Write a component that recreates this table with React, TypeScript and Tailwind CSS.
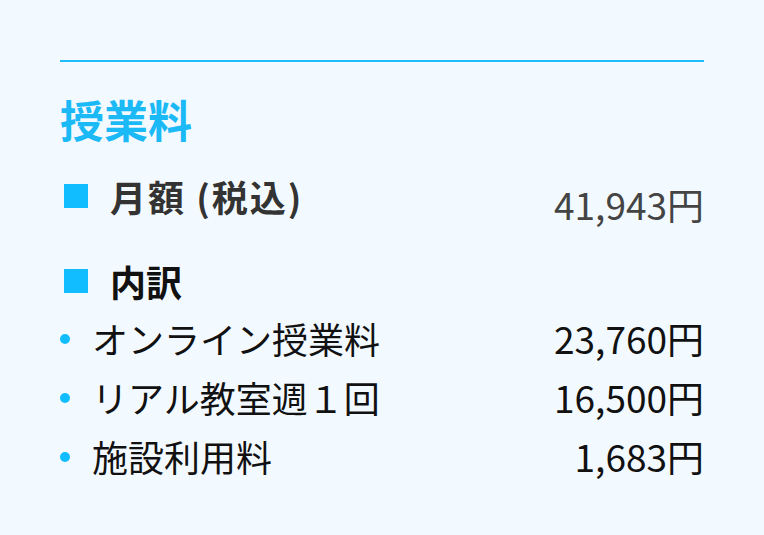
import React from "react";

const items = [
  { label: "オンライン授業料", price: "23,760円" },
  { label: "リアル教室週１回", price: "16,500円" },
  { label: "施設利用料", price: "1,683円" },
];

export default function App() {
  return (
    <div
      className="w-[764px] h-[535px] bg-[#f3faff] px-[60px] pt-[60px]"
      style={{ fontFamily: '"Noto Sans CJK JP", "Noto Sans", sans-serif' }}
    >
      <div className="h-[2px] bg-[#1ebcf9]" />
      <h2 className="mt-[35px] text-[44px] leading-[44px] font-bold text-[#1cb9f7]">授業料</h2>

      <div className="mt-[36px] flex justify-between items-start">
        <div className="flex items-center h-[38px]">
          <div className="ml-[4px] w-[24px] h-[24px] bg-[#12bdff]" />
          <span className="ml-[22px] text-[36px] leading-[38px] font-bold tracking-[2px] text-[#333333]">
            月額 (税込)
          </span>
        </div>
        <span className="pt-[8px] text-[37px] leading-[38px] text-[#444444]">41,943円</span>
      </div>

      <div className="mt-[39px] flex items-center h-[38px]">
        <div className="ml-[4px] w-[24px] h-[24px] bg-[#12bdff]" />
        <span className="ml-[22px] text-[36px] leading-[38px] font-bold text-[#111111]">内訳</span>
      </div>

      <div className="mt-[9px] flex flex-col">
        {items.map((it) => (
          <div key={it.label} className="flex justify-between items-center h-[59px]">
            <div className="flex items-center">
              <div className="w-[10px] h-[10px] rounded-full bg-[#12bdff]" />
              <span className="ml-[22px] text-[36px] leading-[59px] text-[#111111]">{it.label}</span>
            </div>
            <span className="text-[37px] leading-[59px] text-[#111111]">{it.price}</span>
          </div>
        ))}
      </div>
    </div>
  );
}
